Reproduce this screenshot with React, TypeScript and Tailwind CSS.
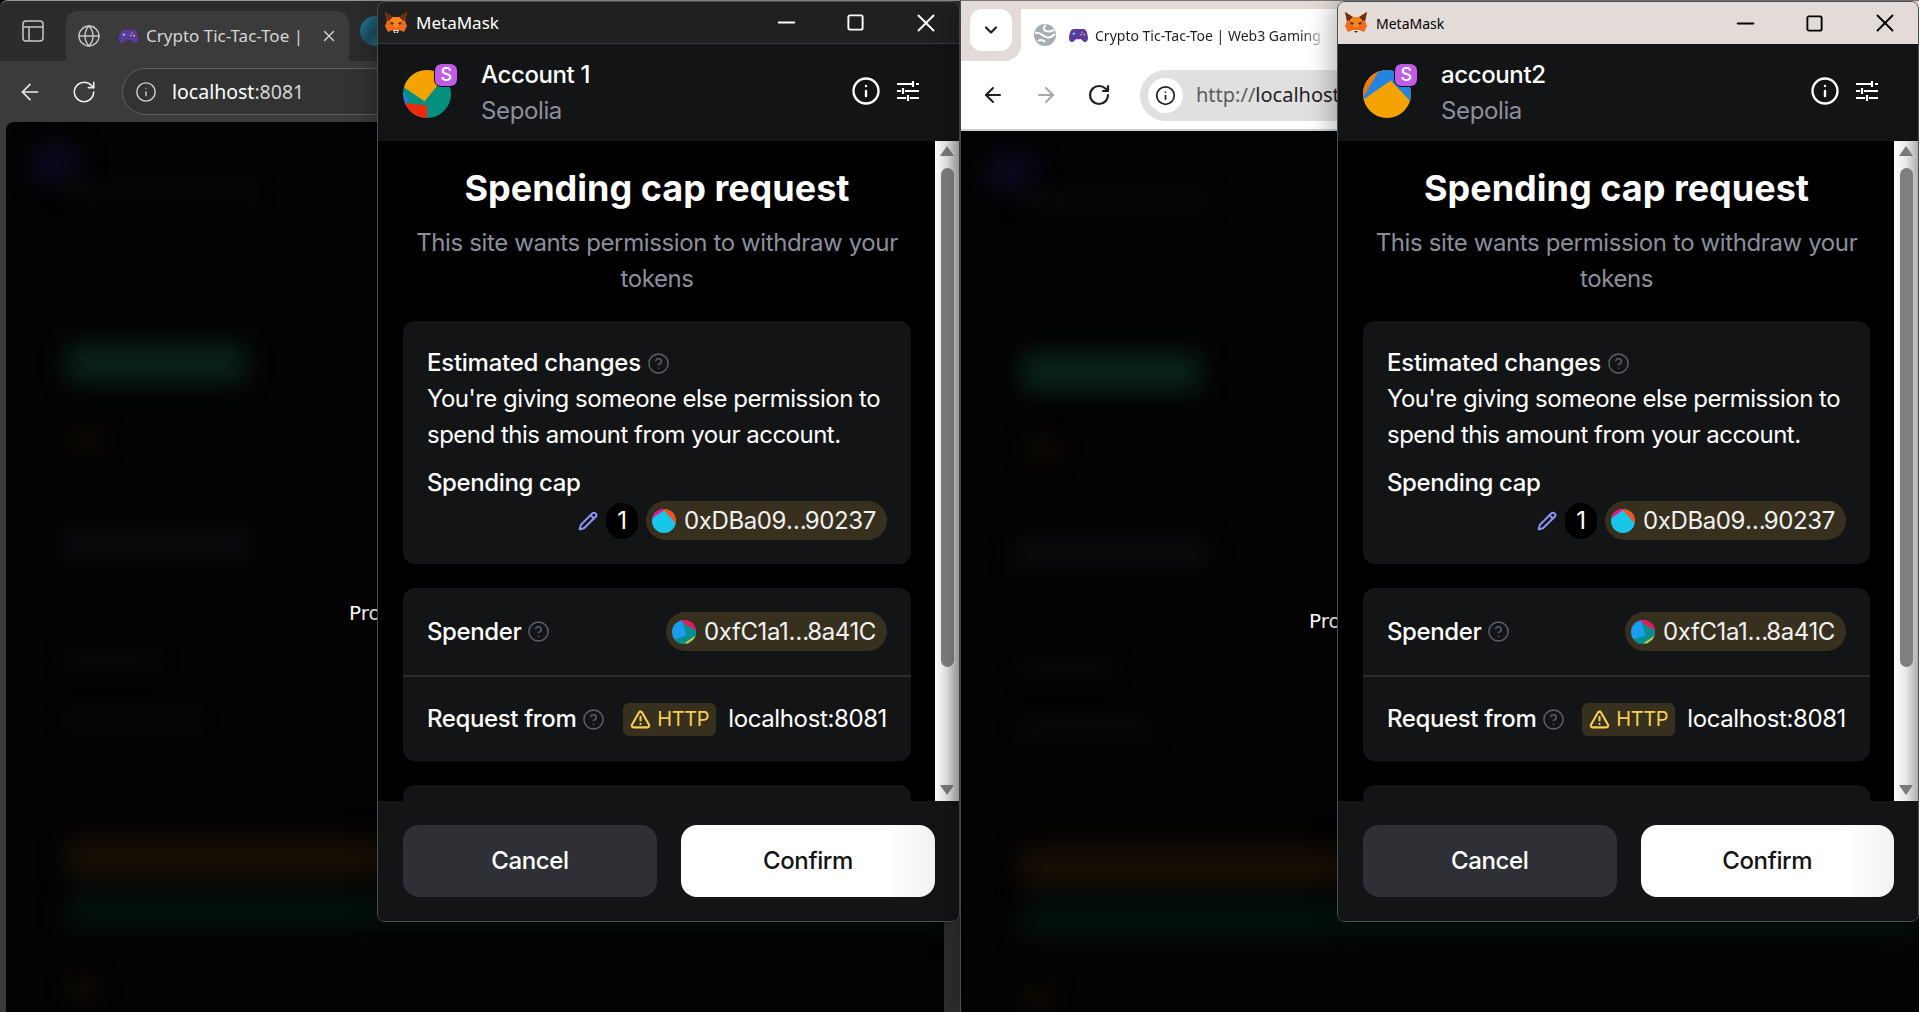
import { ArrowLeft, ArrowRight, ChevronDown, CircleHelp, Globe, Info, Minus, Pencil, RotateCw, Square, TriangleAlert, X } from "lucide-react";

const Fox = () => (
  <svg viewBox="0 0 24 22" className="h-[22px] w-6 shrink-0">
    <polygon points="1,0 9,5 15,5 23,0 21,9 23,14 20,20 15,18 9,18 4,20 1,14 3,9" fill="#ee6a1e" />
    <polygon points="1,0 9,5 6,8 3,9" fill="#6b2f0e" />
    <polygon points="23,0 15,5 18,8 21,9" fill="#6b2f0e" />
    <polygon points="6,8 9,5 15,5 18,8 14,15 10,15" fill="#f6851b" />
    <polygon points="6,10 10,11 8,13" fill="#33210f" />
    <polygon points="18,10 14,11 16,13" fill="#33210f" />
    <polygon points="9,18 15,18 14,21 10,21" fill="#f5e6d8" />
    <polygon points="10,19 14,19 12,21" fill="#33210f" />
  </svg>
);

const GamePad = () => (
  <svg viewBox="0 0 20 16" className="h-[15px] w-[19px] shrink-0">
    <path d="M5 1h10c3 0 4 3 5 8 .6 4-1 6-3 6-2.300 0-3-3-4.500-3h-5C6 12 5.300 15 3 15c-2 0-3.600-2-3-6C1 4 2 1 5 1z" fill="#5b3a9e" />
    <circle cx="5" cy="6" r="1.300" fill="#6fd0f0" />
    <circle cx="14" cy="4.500" r="1" fill="#ef5f8f" />
    <circle cx="16" cy="7" r="1" fill="#f5c542" />
    <circle cx="12.500" cy="7" r="1" fill="#5fd08a" />
  </svg>
);

const Avatar1 = () => (
  <svg viewBox="0 0 100 100" className="size-12 rounded-full">
    <rect width="100" height="100" fill="#03907f" />
    <polygon points="0,35 45,65 90,10 70,-5 10,-5" fill="#f5a300" />
    <polygon points="-2,42 5,72 12,62" fill="#2a7fe0" />
    <polygon points="0,68 50,74 50,102 0,102" fill="#f0290a" />
  </svg>
);

const Avatar2 = () => (
  <svg viewBox="0 0 100 100" className="size-12 rounded-full">
    <rect width="100" height="100" fill="#f5a300" />
    <polygon points="0,62 58,22 100,66 100,-5 0,-5" fill="#2683e0" />
    <polygon points="0,58 34,0 -5,0" fill="#ef7a0a" />
  </svg>
);

const TokenDba = () => (
  <svg viewBox="0 0 100 100" className="size-6 shrink-0 rounded-full">
    <rect width="100" height="100" fill="#18c6ea" />
    <polygon points="10,28 50,5 100,60 100,-5 10,-5" fill="#f4511e" />
    <polygon points="0,40 55,0 0,0" fill="#f0148c" />
  </svg>
);

const TokenFc1 = () => (
  <svg viewBox="0 0 100 100" className="size-6 shrink-0 rounded-full">
    <rect width="100" height="100" fill="#1a9cf0" />
    <polygon points="10,80 60,65 45,10 100,45 100,105 10,105" fill="#078e8e" />
    <polygon points="45,10 100,45 90,-5 40,-5" fill="#f0145a" />
    <polygon points="55,95 100,65 100,72 62,100" fill="#f5c518" />
  </svg>
);

const SlidersIcon = () => (
  <svg viewBox="0 0 24 24" className="size-6" fill="none" stroke="white" strokeWidth="2.200">
    <path d="M1 5h15M20 5h3M1 12h4M9 12h14M1 19h9M14 19h9M17 2v6M7 9v6M12 16v6" />
  </svg>
);

const Question = () => <CircleHelp className="size-[23px] shrink-0 text-[#5d626e]" strokeWidth={1.5} />;

const Chip = ({ start, end, icon }: { start: string; end: string; icon: React.ReactNode }) => (
  <div className="flex h-[39px] items-center gap-2 rounded-full bg-[#38301f] pl-[6px] pr-[11px] text-[24px] leading-none text-[#f1f1f1]">
    {icon}
    <span>
      {start}
      <span className="tracking-[-2px]">…</span>
      {end}
    </span>
  </div>
);

const MetaMaskPopup = ({ name, light, avatar }: { name: string; light?: boolean; avatar: React.ReactNode }) => (
  <div
    className={`absolute top-0 right-0 z-10 flex h-[921px] flex-col overflow-hidden rounded-lg border border-[#4c4d50] font-['Inter',sans-serif] tracking-[-0.38px] shadow-[-6px_0_24px_rgba(0,0,0,0.28)] ${
      light ? "w-[582px] text-black" : "w-[583px] text-white"
    }`}
  >
    {/* title bar */}
    <div className={`flex h-[42px] shrink-0 items-center pl-[6px] font-['Noto_Sans',sans-serif] tracking-normal ${light ? "bg-[#e3dbd7]" : "border-b border-[#3b3c3f] bg-[#202020]"}`}>
      <Fox />
      <span className={`ml-2 ${light ? "text-[14px]" : "text-[17px]"}`}>MetaMask</span>
      <div className="ml-auto flex items-center gap-[46px] pr-[18px]">
        <Minus className="size-[27px]" strokeWidth={1.6} />
        <Square className="size-[19px]" strokeWidth={2.4} />
        <X className="size-[30px]" strokeWidth={1.5} />
      </div>
    </div>

    {/* account header */}
    <div className="flex h-[97px] shrink-0 items-center bg-[#131416] pl-[25px] pr-[39px] text-white">
      <div className="relative mt-[2px]">
        {avatar}
        <div className="absolute -top-[6px] -right-[6px] flex size-[22px] items-center justify-center rounded-[6px] bg-[#c25be8] text-[18px] font-medium leading-none outline-1 outline-[#131416]">S</div>
      </div>
      <div className="ml-[30px] flex flex-col">
        <span className="text-[24px] font-medium leading-9">{name}</span>
        <span className="text-[24px] leading-9 text-[#8b8f9c]">Sepolia</span>
      </div>
      <div className="ml-auto -mt-[4px] flex items-center gap-[15px]">
        <Info className="size-[30px]" strokeWidth={1.9} />
        <SlidersIcon />
      </div>
    </div>

    {/* scrolling body */}
    <div className="flex h-[660px] shrink-0 overflow-hidden bg-black text-white">
      <div className="flex min-w-0 flex-1 flex-col pl-[25px] pr-[24px] pt-[23px]">
        <h1 className="text-center text-[36px] font-bold leading-[48px] tracking-normal">Spending cap request</h1>
        <p className="mt-[13px] text-center text-[24px] leading-9 text-[#8b8f9c]">
          This site wants permission to withdraw your tokens
        </p>
        <div className="mt-6 shrink-0 rounded-xl bg-[#131416] p-6 text-[24px] leading-9">
          <div className="flex items-center gap-[6px] font-medium tracking-[-0.25px]">
            Estimated changes <Question />
          </div>
          <p className="tracking-[-0.5px]">You're giving someone else permission to spend this amount from your account.</p>
          <div className="mt-3 font-medium">Spending cap</div>
          <div className="flex items-center justify-end gap-[8px]">
            <Pencil className="size-[20px] text-[#8a96f5]" strokeWidth={2.4} />
            <div className="flex h-9 w-8 items-center justify-center rounded-full bg-black">1</div>
            <Chip start="0xDBa09" end="90237" icon={<TokenDba />} />
          </div>
        </div>
        <div className="mt-6 shrink-0 rounded-xl bg-[#131416] text-[24px] leading-9">
          <div className="flex h-[89px] items-center justify-between border-b-2 border-[#2b2c2f] px-6">
            <div className="flex items-center gap-[6px] font-medium">
              Spender <Question />
            </div>
            <Chip start="0xfC1a1" end="8a41C" icon={<TokenFc1 />} />
          </div>
          <div className="flex h-[84px] items-center px-6">
            <div className="flex shrink-0 items-center gap-[6px] whitespace-nowrap font-medium">
              Request from <Question />
            </div>
            <div className="ml-auto flex h-[33px] items-center gap-[6px] rounded-md bg-[#38301f] px-[7px] text-[20px] text-[#f7cf4f]">
              <TriangleAlert className="size-[21px]" strokeWidth={2.4} />
              HTTP
            </div>
            <span className="ml-3 whitespace-nowrap">localhost:8081</span>
          </div>
        </div>
        <div className="mt-6 h-12 shrink-0 rounded-xl bg-[#131416]" />
      </div>
      {/* native scrollbar */}
      <div className="flex w-6 shrink-0 flex-col items-center bg-gradient-to-r from-[#ffffff] via-[#e8e8e8] to-[#b0b0b0] pt-[5px]">
        <div className="size-0 border-x-[7px] border-b-[10px] border-x-transparent border-b-[#7a7a7a]" />
        <div className="mt-[12px] h-[499px] w-[13px] rounded-full bg-[#7f7f7f]" />
        <div className="mt-auto mb-[6px] size-0 border-x-[7px] border-t-[10px] border-x-transparent border-t-[#7a7a7a]" />
      </div>
    </div>

    {/* footer */}
    <div className="flex flex-1 gap-6 bg-[#131416] pl-[25px] pr-[24px] pt-6 text-[24px] font-medium">
      <button className="flex h-[72px] flex-1 items-center justify-center rounded-2xl bg-[#2f3036] text-white">Cancel</button>
      <button className="flex h-[72px] flex-1 items-center justify-center rounded-2xl bg-gradient-to-r from-white from-80% to-[#f2f2f2] text-[#131416]">Confirm</button>
    </div>
  </div>
);

const BlurredPage = ({ right }: { right?: boolean }) => (
  <div className="relative flex-1 overflow-hidden bg-[#030303]">
    <div className="absolute left-[25px] top-[22px] h-[40px] w-[50px] rounded-full bg-[#0c0920] blur-[12px]" />
    <div className="absolute left-[58px] top-[62px] h-[14px] w-[190px] bg-[#090909] blur-[10px]" />
    <div className="absolute left-[60px] top-[222px] h-[38px] w-[180px] rounded-lg bg-[#0a2419] blur-[12px]" />
    <div className="absolute left-[65px] top-[306px] h-[24px] w-[32px] bg-[#0d0902] blur-[10px]" />
    <div className="absolute left-[55px] top-[410px] h-[24px] w-[190px] bg-[#0d0d10] blur-[12px]" />
    <div className="absolute left-[60px] top-[530px] h-[16px] w-[90px] bg-[#080808] blur-[10px]" />
    <div className="absolute left-[60px] top-[590px] h-[16px] w-[130px] bg-[#080808] blur-[10px]" />
    <div className="absolute left-[60px] top-[718px] h-[38px] w-[900px] bg-[#1a1006] blur-[12px]" />
    <div className="absolute left-[60px] top-[770px] h-[36px] w-[900px] bg-[#04120c] blur-[12px]" />
    <div className="absolute left-[62px] top-[856px] h-[22px] w-[30px] bg-[#0f0a03] blur-[10px]" />
    <span className={`absolute font-['DejaVu_Sans',sans-serif] text-[20px] leading-6 text-white ${right ? "left-[348px] top-[478px]" : "left-[343px] top-[479px]"}`}>Process</span>
  </div>
);

const LeftBrowser = () => (
  <div className="relative flex h-full w-[961px] shrink-0 flex-col rounded-tl-lg border-t border-[#9a9591] border-r border-r-[#5a5a5a] bg-[#3b3b3b] font-['Noto_Sans',sans-serif] text-[#d6d6d6]">
    <div className="flex h-[60px] shrink-0 items-end rounded-tl-lg bg-[#2c2c2c]">
      <div className="flex h-[60px] w-[66px] items-center justify-center">
        <svg viewBox="0 0 22 22" className="size-[22px]" fill="none" stroke="#c8c8c8" strokeWidth="1.500">
          <rect x="1" y="1" width="20" height="20" rx="3" />
          <path d="M1 7h20M7 7v14" />
        </svg>
      </div>
      <div className="flex h-[50px] w-[283px] items-center rounded-t-xl bg-[#3b3b3b] pl-[11px]">
        <Globe className="size-6 text-[#c8c8c8]" strokeWidth={1.4} />
        <span className="ml-[18px]"><GamePad /></span>
        <span className="ml-2 w-[156px] overflow-hidden whitespace-nowrap text-[17px]">Crypto Tic-Tac-Toe |</span>
        <X className="ml-[18px] size-[18px]" strokeWidth={1.8} />
      </div>
      <div className="ml-[11px] self-center">
        <div className="size-[30px] rounded-full bg-gradient-to-br from-[#2a7f9e] via-[#1b4f63] to-[#2f8a6a]" />
      </div>
    </div>
    <div className="flex h-[61px] shrink-0 items-center">
      <ArrowLeft className="ml-[17px] size-[26px] text-[#ececec]" strokeWidth={1.5} />
      <RotateCw className="ml-[28px] size-[26px] text-[#ececec]" strokeWidth={1.5} />
      <div className="ml-[25px] flex h-[47px] flex-1 items-center rounded-l-full border border-[#5e5e5e] bg-[#333333] pl-[12px]">
        <Info className="size-[22px] text-[#d6d6d6]" strokeWidth={1.5} />
        <span className="ml-[15px] text-[19.500px] text-white">localhost<span className="text-[#d6d6d6]">:8081</span></span>
      </div>
    </div>
    <div className="flex min-h-0 flex-1 pl-[6px]">
      <div className="flex flex-1 overflow-hidden rounded-tl-lg">
        <BlurredPage />
      </div>
      <div className="w-4 shrink-0 bg-[#2e2e2e]" />
    </div>
    <MetaMaskPopup name="Account 1" avatar={<Avatar1 />} />
  </div>
);

const RightBrowser = () => (
  <div className="relative z-20 flex h-full flex-1 flex-col border-t border-[#7a7a7a] bg-[#e3dbd7] font-['Noto_Sans',sans-serif] shadow-[-8px_0_22px_rgba(0,0,0,0.22)]">
    <div className="h-[8px] shrink-0" />
    <div className="flex h-[52px] shrink-0 bg-white">
      <div className="h-full w-[60px] shrink-0 rounded-br-2xl bg-[#e3dbd7] pl-[9px]">
        <div className="flex size-[42px] items-center justify-center rounded-xl bg-white">
          <ChevronDown className="size-[20px] text-[#1f1f1f]" strokeWidth={2.6} />
        </div>
      </div>
      <div className="flex min-w-0 flex-1 items-center pl-[13px] text-[#1f1f1f]">
        <svg viewBox="0 0 22 22" className="size-[22px] shrink-0">
          <circle cx="11" cy="11" r="11" fill="#a5adb4" />
          <path d="M1 9c4-1 6 1 9 3s7 2 11-2M12 1c-3 2-3 5 0 6s6 0 8-1M4 17c3-2 5-1 7 1" fill="none" stroke="white" strokeWidth="2" />
        </svg>
        <span className="ml-[13px]"><GamePad /></span>
        <span className="ml-[7px] w-[228px] overflow-hidden whitespace-nowrap bg-gradient-to-r from-[#1f1f1f] from-90% to-[#d8d8d8] bg-clip-text text-[14px] text-transparent">Crypto Tic-Tac-Toe | Web3 Gaming</span>
      </div>
    </div>
    <div className="flex h-[70px] shrink-0 items-center border-b-2 border-[#cfcfcf] bg-white">
      <ArrowLeft className="ml-[20px] size-[24px] text-[#1f1f1f]" strokeWidth={2} />
      <ArrowRight className="ml-[29px] size-[24px] text-[#a8a8a8]" strokeWidth={2} />
      <RotateCw className="ml-[29px] size-[24px] text-[#1f1f1f]" strokeWidth={2.2} />
      <div className="ml-[29px] flex h-[51px] flex-1 items-center rounded-l-full bg-[#e0e0e0] pl-[8px]">
        <div className="flex size-[35px] items-center justify-center rounded-full bg-white">
          <Info className="size-[21px] text-[#1f1f1f]" strokeWidth={2} />
        </div>
        <span className="ml-[13px] text-[20px] text-[#5c5c5c]">http://<span className="text-[#1f1f1f]">localhost:8081</span></span>
      </div>
    </div>
    <BlurredPage right />
    <MetaMaskPopup name="account2" light avatar={<Avatar2 />} />
  </div>
);

const App: React.FC = () => {
  return (
    <div className="flex h-[1012px] w-[1919px] overflow-hidden bg-black">
      <LeftBrowser />
      <RightBrowser />
    </div>
  );
};

export default App;
